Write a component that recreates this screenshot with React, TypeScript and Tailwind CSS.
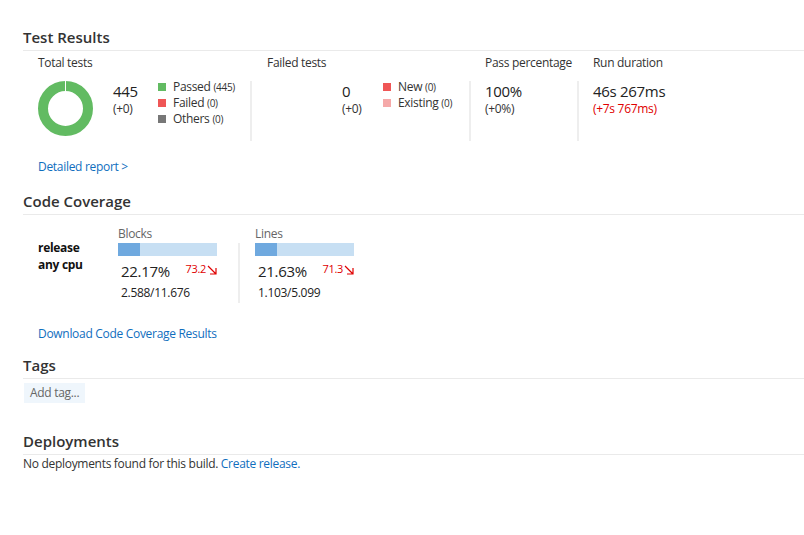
const FONT = "font-['Segoe_UI','Open_Sans',sans-serif]";

function SectionTitle({ title }: { title: string }) {
  return (
    <div className="border-b border-[#eaeaea] pb-[3px]">
      <h2 className="text-[15px] font-semibold leading-[20px] tracking-normal text-[#333]">{title}</h2>
    </div>
  );
}

function Donut() {
  return (
    <svg width="55" height="55" viewBox="0 0 55 55" className="shrink-0">
      <circle cx="27.5" cy="27.5" r="22.5" fill="none" stroke="#62bb62" strokeWidth="10" />
      <line x1="27.5" y1="0" x2="27.5" y2="10" stroke="#fff" strokeWidth="1" />
    </svg>
  );
}

function Legend({ items }: { items: { color: string; label: string; count: string }[] }) {
  return (
    <div className="mt-[-2px] flex flex-col">
      {items.map((it) => (
        <div key={it.label} className="flex h-[16px] items-center gap-[7px] text-[12px] text-[#333]">
          <span className={`h-[8px] w-[8px] ${it.color}`} />
          <span>
            {it.label} <span className="text-[10px]">{it.count}</span>
          </span>
        </div>
      ))}
    </div>
  );
}

function Metric({ value, delta, red }: { value: string; delta: string; red?: boolean }) {
  return (
    <div className="flex flex-col">
      <span className="text-[15px] leading-[20px] text-[#222]">{value}</span>
      <span className={`text-[12px] leading-[16px] ${red ? "text-[#e00000]" : "text-[#333]"}`}>{delta}</span>
    </div>
  );
}

function TrendDown() {
  return (
    <svg width="10" height="10" viewBox="0 0 10 10" className="ml-[1px] inline-block">
      <path d="M1 1 L9 9 M9 3 V9 H3" fill="none" stroke="#e00000" strokeWidth="1.2" />
    </svg>
  );
}

function CoverageBar({ label, pct, fill, trend, counts }: { label: string; pct: string; fill: number; trend: string; counts: string }) {
  return (
    <div className="flex w-[99px] flex-col">
      <span className="text-[12px] leading-[16px] text-[#666]">{label}</span>
      <div className="mt-[1px] h-[13px] w-full bg-[#c7dff3]">
        <div className="h-full bg-[#6fa9df]" style={{ width: `${fill}%` }} />
      </div>
      <div className="mt-[5px] flex items-center justify-between pl-[3px]">
        <span className="text-[15px] leading-[20px] text-[#222]">{pct}</span>
        <span className="mt-[-3px] flex items-center text-[11px] text-[#e00000]">
          {trend}
          <TrendDown />
        </span>
      </div>
      <span className="mt-[4px] pl-[3px] text-[12px] leading-[16px] text-[#222]">{counts}</span>
    </div>
  );
}

export default function App() {
  return (
    <div className={`${FONT} min-h-[535px] w-[804px] bg-white pl-[23px] pt-[27px] tracking-[-0.3px] text-[#333]`}>
      <SectionTitle title="Test Results" />
      <div className="flex pl-[15px] pt-[4px]">
        <div className="w-[212px]">
          <div className="text-[12px] leading-[16px]">Total tests</div>
          <div className="mt-[10px] flex h-[60px]">
            <Donut />
            <div className="ml-[20px] w-[45px]">
              <Metric value="445" delta="(+0)" />
            </div>
            <Legend
              items={[
                { color: "bg-[#62bb62]", label: "Passed", count: "(445)" },
                { color: "bg-[#ef5656]", label: "Failed", count: "(0)" },
                { color: "bg-[#777]", label: "Others", count: "(0)" },
              ]}
            />
          </div>
        </div>
        <div className="w-[219px]">
          <div className="pl-[17px] text-[12px] leading-[16px]">Failed tests</div>
          <div className="mt-[10px] flex h-[60px] border-l-2 border-[#eeeeee] pl-[90px]">
            <div className="w-[41px]">
              <Metric value="0" delta="(+0)" />
            </div>
            <Legend
              items={[
                { color: "bg-[#ef5656]", label: "New", count: "(0)" },
                { color: "bg-[#f5a9a9]", label: "Existing", count: "(0)" },
              ]}
            />
          </div>
        </div>
        <div className="w-[108px]">
          <div className="pl-[16px] text-[12px] leading-[16px]">Pass percentage</div>
          <div className="mt-[10px] h-[60px] border-l-2 border-[#eeeeee] pl-[14px]">
            <Metric value="100%" delta="(+0%)" />
          </div>
        </div>
        <div className="flex-1">
          <div className="pl-[16px] text-[12px] leading-[16px]">Run duration</div>
          <div className="mt-[10px] h-[60px] border-l-2 border-[#eeeeee] pl-[14px]">
            <Metric value="46s 267ms" delta="(+7s 767ms)" red />
          </div>
        </div>
      </div>
      <div className="mt-[18px] pl-[15px] text-[12px] leading-[16px] text-[#106ebe]">Detailed report &gt;</div>

      <div className="mt-[16px]">
        <SectionTitle title="Code Coverage" />
      </div>
      <div className="flex pl-[15px] pt-[11px]">
        <div className="w-[80px] pt-[13px] text-[12px] font-bold leading-[17px] text-[#111]">
          <div>release</div>
          <div>any cpu</div>
        </div>
        <CoverageBar label="Blocks" pct="22.17%" fill={22} trend="73.2" counts="2.588/11.676" />
        <div className="ml-[21px] mt-[17px] h-[60px] w-[2px] bg-[#eeeeee]" />
        <div className="ml-[15px]">
          <CoverageBar label="Lines" pct="21.63%" fill={22} trend="71.3" counts="1.103/5.099" />
        </div>
      </div>
      <div className="mt-[23px] pl-[15px] text-[12px] font-medium leading-[16px] text-[#106ebe]">
        Download Code Coverage Results
      </div>

      <div className="mt-[13px]">
        <SectionTitle title="Tags" />
      </div>
      <div className="ml-[1px] inline-flex h-[20px] items-center bg-[#eff6fc] px-[6px] text-[12px] text-[#666]">
        Add tag...
      </div>

      <div className="mt-[28px]">
        <SectionTitle title="Deployments" />
      </div>
      <div className="mt-[1px] text-[12px] leading-[16px] text-[#333]">
        No deployments found for this build. <span className="text-[#106ebe]">Create release.</span>
      </div>
    </div>
  );
}
